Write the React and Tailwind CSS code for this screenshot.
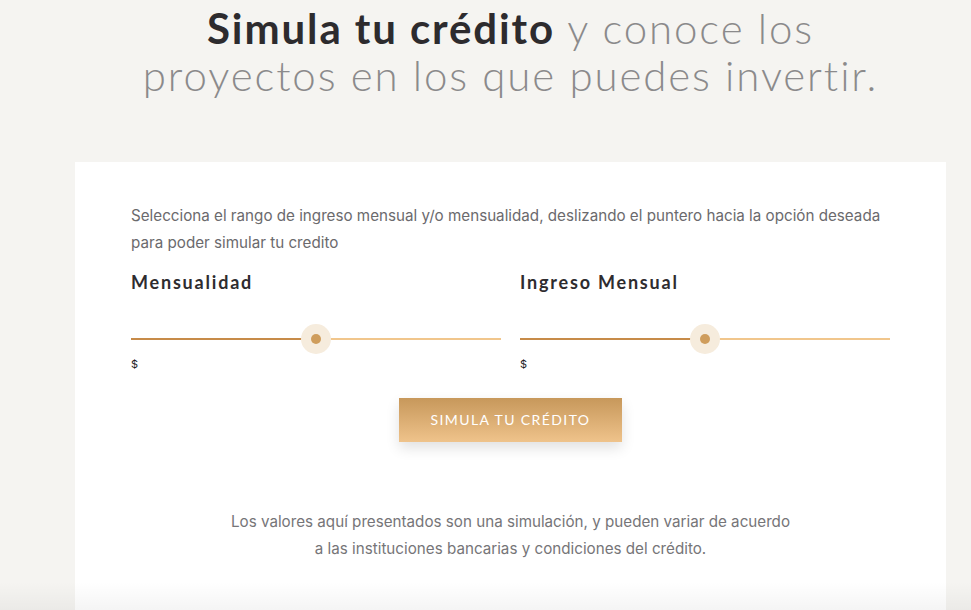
import React, { useState } from 'react';

function RangeSlider({ label, value, onChange }) {
  return (
    <div className="flex-1">
      <h3 className="text-[18px] font-bold tracking-[0.1em] text-[#2e2c2f] font-['Lato',sans-serif] leading-[24px]">{label}</h3>
      <div className="relative mt-[30px] h-[30px] flex items-center">
        <div className="h-[2px] w-full bg-[#f1c68c]" />
        <div className="absolute left-0 top-[14px] h-[2px] bg-[#c78b49]" style={{ width: `${value}%` }} />
        <div
          className="absolute top-0 w-[30px] h-[30px] -ml-[15px] rounded-full bg-[#f6ecdd] flex items-center justify-center"
          style={{ left: `${value}%` }}
        >
          <div className="w-[10px] h-[10px] rounded-full bg-[#cf9d5c]" />
        </div>
        <input
          type="range"
          min="0"
          max="100"
          value={value}
          onChange={(e) => onChange(Number(e.target.value))}
          className="absolute inset-0 w-full opacity-0 cursor-pointer"
        />
      </div>
      <p className="mt-[2px] text-[11px] text-[#222] font-['Inter',sans-serif]">$</p>
    </div>
  );
}

export default function App() {
  const [mensualidad, setMensualidad] = useState(50);
  const [ingreso, setIngreso] = useState(50);

  return (
    <div className="relative min-h-[610px] bg-[#f5f4f1] overflow-hidden">
      {/* Heading */}
      <div className="pl-[50px] pt-[5px] text-center font-['Lato',sans-serif] text-[42px] leading-[47px] tracking-[0.045em] text-[#8b8a8b] font-light">
        <h1>
          <span className="font-bold text-[#2d2b2e]">Simula tu crédito</span> y conoce los
          <br />
          proyectos en los que puedes invertir.
        </h1>
      </div>

      {/* Card */}
      <div className="ml-[75px] mt-[63px] w-[871px] bg-white px-[56px] pt-[40px] pb-[60px]">
        <p className="text-[15.2px] leading-[27px] text-[#6b6a6d] font-['Inter',sans-serif]">
          Selecciona el rango de ingreso mensual y/o mensualidad, deslizando el puntero hacia la opción deseada
          <br />
          para poder simular tu credito
        </p>

        <div className="mt-[14px] flex gap-[19px]">
          <RangeSlider label="Mensualidad" value={mensualidad} onChange={setMensualidad} />
          <RangeSlider label="Ingreso Mensual" value={ingreso} onChange={setIngreso} />
        </div>

        <div className="mt-[25px] flex justify-center">
          <button className="w-[223px] h-[44px] bg-gradient-to-b from-[#c7985b] to-[#efc38b] text-white text-[14px] tracking-[0.1em] font-['Lato',sans-serif] shadow-[0_6px_14px_rgba(0,0,0,0.12)]">
            SIMULA TU CRÉDITO
          </button>
        </div>

        <p className="mt-[66px] text-center text-[15.2px] leading-[27px] text-[#767578] font-['Inter',sans-serif]">
          Los valores aquí presentados son una simulación, y pueden variar de acuerdo
          <br />
          a las instituciones bancarias y condiciones del crédito.
        </p>
      </div>

      {/* bottom fade */}
      <div className="pointer-events-none absolute left-0 right-0 bottom-0 h-[40px] bg-gradient-to-b from-transparent to-[rgba(0,0,0,0.06)]" />
    </div>
  );
}
